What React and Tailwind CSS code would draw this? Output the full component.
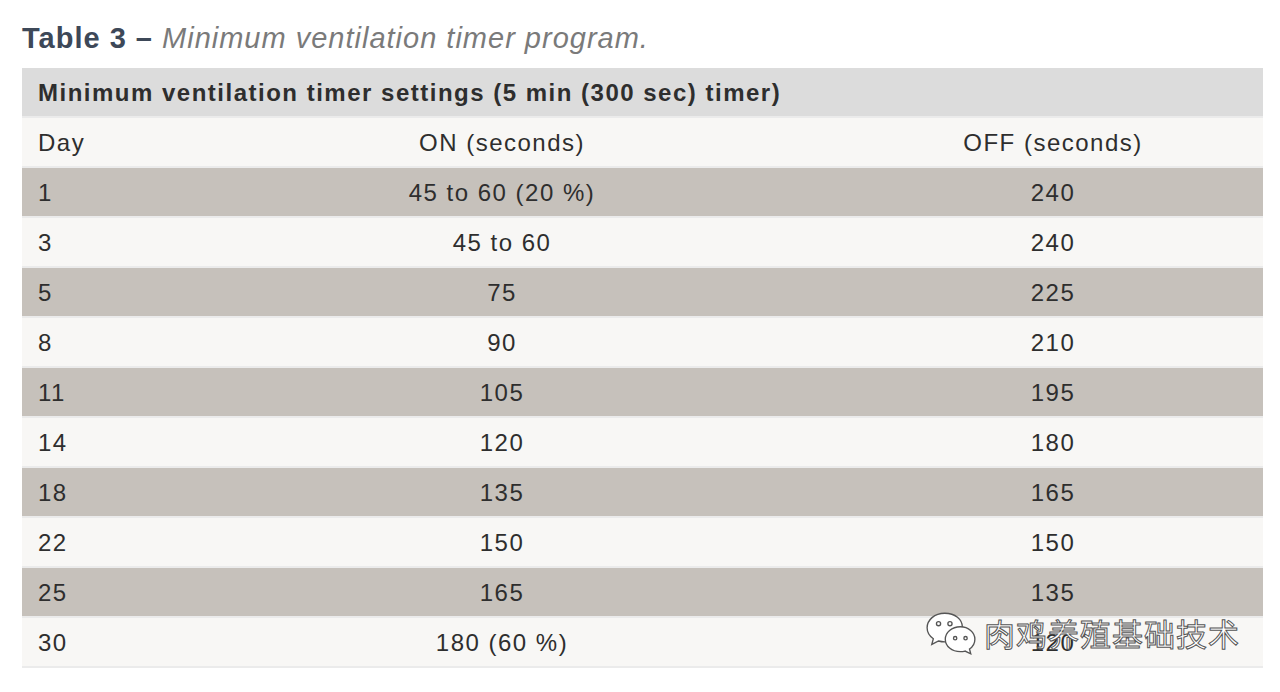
const rows = [
  ["1", "45 to 60 (20 %)", "240"],
  ["3", "45 to 60", "240"],
  ["5", "75", "225"],
  ["8", "90", "210"],
  ["11", "105", "195"],
  ["14", "120", "180"],
  ["18", "135", "165"],
  ["22", "150", "150"],
  ["25", "165", "135"],
  ["30", "180 (60 %)", "120"],
];

function WeChatIcon() {
  return (
    <svg width="54" height="46" viewBox="0 0 52 44" fill="white" stroke="#555" strokeWidth="1.3">
      <path d="M20 3C10 3 3 9.5 3 17c0 4.3 2.3 8 6 10.5L7.5 33l6.5-3.3c1.9.5 3.9.8 6 .8 9.9 0 17-6.3 17-14S29.9 3 20 3z" />
      <circle cx="14" cy="13" r="2" fill="white" />
      <circle cx="25" cy="13" r="2" fill="white" />
      <path d="M35 16c-8.3 0-14.5 5.4-14.5 12S26.7 40 35 40c1.6 0 3.1-.2 4.5-.6L45 42l-1.2-4.6c3.3-2.2 5.2-5.5 5.2-9.4 0-6.6-6.2-12-14-12z" />
      <circle cx="30" cy="27" r="1.6" fill="white" />
      <circle cx="40" cy="27" r="1.6" fill="white" />
    </svg>
  );
}

export default function App() {
  return (
    <div className="relative w-[1280px] h-[692px] bg-white pt-[20px] pl-[22px] pr-[17px]" style={{ fontFamily: '"Liberation Sans", Arial, sans-serif' }}>
      <div className="text-[29px] leading-[36px] tracking-[1px]">
        <span className="font-bold text-[#3d4858]">Table 3 – </span>
        <span className="italic text-[#7a7a7a]">Minimum ventilation timer program.</span>
      </div>

      <div className="mt-[12px] text-[24px] tracking-[1.5px] text-[#2e2e2e]">
        <div className="h-[50px] bg-[#dcdcdc] flex items-center pl-[16px] pt-[2px] font-bold border-b-2 border-[#ebebeb]">
          Minimum ventilation timer settings (5 min (300 sec) timer)
        </div>
        <div className="grid grid-cols-[139px_682px_1fr] h-[50px] items-center pt-[2px] bg-[#f8f7f5] border-b-2 border-[#ebebeb]">
          <div className="pl-[16px]">Day</div>
          <div className="text-center">ON (seconds)</div>
          <div className="text-center">OFF (seconds)</div>
        </div>
        {rows.map((r, i) => (
          <div
            key={r[0]}
            className={
              "grid grid-cols-[139px_682px_1fr] h-[50px] items-center pt-[2px] border-b-2 border-[#ebebeb] " +
              (i % 2 === 0 ? "bg-[#c6c1bb]" : "bg-[#f8f7f5]")
            }
          >
            <div className="pl-[16px]">{r[0]}</div>
            <div className="text-center">{r[1]}</div>
            <div className="text-center">{r[2]}</div>
          </div>
        ))}
      </div>

      <div className="absolute left-[924px] top-[610px] flex items-center gap-[6px]">
        <WeChatIcon />
        <span
          className="text-[31px] text-white tracking-[1px]"
          style={{ fontFamily: '"Noto Sans CJK SC", sans-serif', WebkitTextStroke: "1px #555" }}
        >
          肉鸡养殖基础技术
        </span>
      </div>
    </div>
  );
}
